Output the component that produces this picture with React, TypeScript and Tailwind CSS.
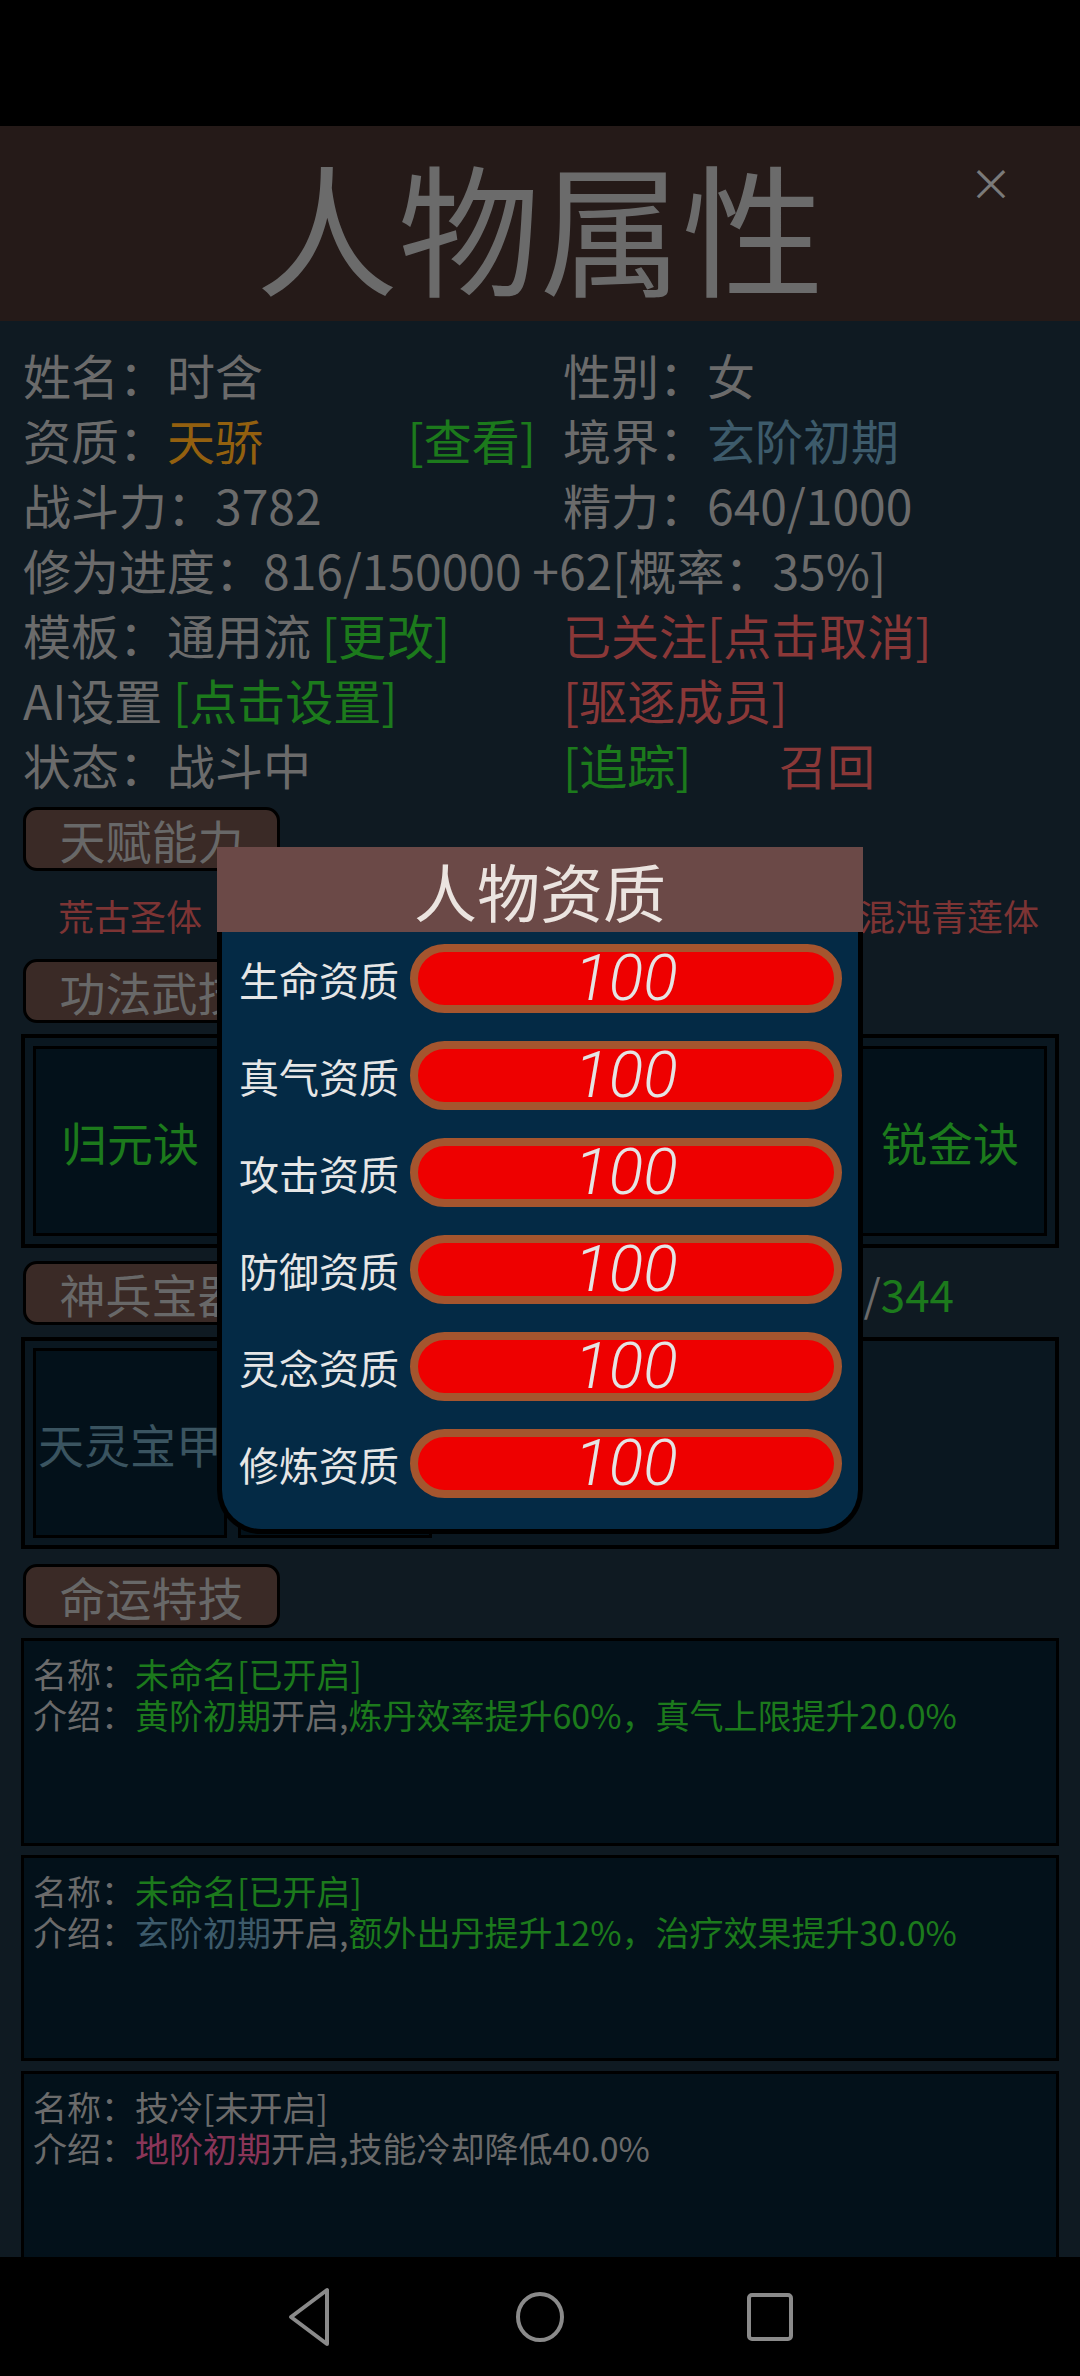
import React from 'react'

const GRAY = 'text-[#6b6b6b]'
const GREEN = 'text-[#1c7a1c]'
const RED = 'text-[#8a3838]'

const QUALITIES = ['生命资质', '真气资质', '攻击资质', '防御资质', '灵念资质', '修炼资质']

function Tab({ label, children }: { label: string; children?: React.ReactNode }) {
  return (
    <div className="flex items-center">
      <div className="ml-[2px] flex h-[64px] w-[257px] items-center justify-center rounded-[14px] border-[3px] border-black bg-[#3a2a26] text-[46px] leading-none text-[#686868]">
        {label}
      </div>
      {children}
    </div>
  )
}

function Cell({ text, color }: { text?: string; color?: string }) {
  return (
    <div className={`flex h-[190px] w-[194px] shrink-0 items-center justify-center border-[3px] border-black bg-[#03111a] text-[46px] leading-none ${color ?? ''}`}>
      {text}
    </div>
  )
}

function FateCard({ children, h }: { children: React.ReactNode; h: string }) {
  return (
    <div className={`flex flex-col gap-[7px] border-[3px] border-black bg-[#03111a] px-[9px] pt-[16px] text-[34px] leading-[34px] ${h}`}>
      {children}
    </div>
  )
}

export default function App() {
  return (
    <div className="relative flex h-[2376px] w-[1080px] flex-col overflow-hidden bg-[#0f1a22] font-['Noto_Sans_CJK_SC','Noto_Sans',sans-serif]">
      {/* status bar */}
      <div className="h-[126px] shrink-0 bg-black" />

      {/* header */}
      <div className="relative flex h-[195px] shrink-0 items-center justify-center bg-[#251a18]">
        <span className="text-[142px] leading-none text-[#6b6b6b]">人物属性</span>
        <span className="absolute right-[67px] top-[34px] text-[44px] leading-none text-[#7a7a7a]">×</span>
      </div>

      {/* content */}
      <div className="flex-1 overflow-hidden px-[21px] pt-[21px]">
        <div className={`grid grid-cols-[540px_1fr] pl-[2px] text-[48px] leading-[65px] ${GRAY}`}>
          <div>姓名：时含</div>
          <div>性别：女</div>
          <div className="flex w-[513px] justify-between">
            <span>
              资质：<span className="text-[#93600f]">天骄</span>
            </span>
            <span className={GREEN}>[查看]</span>
          </div>
          <div>
            境界：<span className="text-[#3d5b6b]">玄阶初期</span>
          </div>
          <div>战斗力：3782</div>
          <div>精力：640/1000</div>
          <div className="col-span-2 whitespace-nowrap">修为进度：816/150000 +62[概率：35%]</div>
          <div>
            模板：通用流 <span className={GREEN}>[更改]</span>
          </div>
          <div className={RED}>已关注[点击取消]</div>
          <div>
            AI设置 <span className={GREEN}>[点击设置]</span>
          </div>
          <div className={RED}>[驱逐成员]</div>
          <div>状态：战斗中</div>
          <div className="flex">
            <span className={`w-[216px] ${GREEN}`}>[追踪]</span>
            <span className={RED}>召回</span>
          </div>
        </div>

        <div className="mt-[10px]">
          <Tab label="天赋能力" />
        </div>
        <div className="flex h-[88px] items-center justify-between pl-[37px] pr-[20px] text-[36px] leading-none text-[#7d3434]">
          <span>荒古圣体</span>
          <span>混沌青莲体</span>
        </div>

        <Tab label="功法武技" />
        <div className="mt-[11px] flex h-[214px] items-center gap-[11px] border-[4px] border-black bg-[#0a1720] px-[8px]">
          <Cell text="归元诀" color={GREEN} />
          <Cell />
          <Cell />
          <Cell />
          <Cell text="锐金诀" color={GREEN} />
        </div>

        <div className="mt-[13px]">
          <Tab label="神兵宝器">
            <span className="ml-auto mr-[105px] text-[44px] leading-none">
              <span className={GRAY}>12/</span>
              <span className={GREEN}>344</span>
            </span>
          </Tab>
        </div>
        <div className="mt-[12px] flex h-[212px] items-center gap-[11px] border-[4px] border-black bg-[#0a1720] px-[8px]">
          <Cell text="天灵宝甲" color="text-[#3a5460]" />
          <Cell />
        </div>

        <div className="mt-[15px]">
          <Tab label="命运特技" />
        </div>
        <div className="mt-[10px] flex flex-col gap-[9px]">
          <FateCard h="h-[208px]">
            <div className={GRAY}>
              名称：<span className={GREEN}>未命名[已开启]</span>
            </div>
            <div className={GRAY}>
              介绍：<span className={GREEN}>黄阶初期</span>开启,
              <span className={GREEN}>炼丹效率提升60%，真气上限提升20.0%</span>
            </div>
          </FateCard>
          <FateCard h="h-[206px]">
            <div className={GRAY}>
              名称：<span className={GREEN}>未命名[已开启]</span>
            </div>
            <div className={GRAY}>
              介绍：<span className="text-[#3d5b6b]">玄阶初期</span>开启,
              <span className={GREEN}>额外出丹提升12%，治疗效果提升30.0%</span>
            </div>
          </FateCard>
          <div className="mt-px">
            <FateCard h="h-[206px]">
              <div className={GRAY}>名称：技冷[未开启]</div>
              <div className={GRAY}>
                介绍：<span className="text-[#8a3558]">地阶初期</span>开启,技能冷却降低40.0%
              </div>
            </FateCard>
          </div>
        </div>
      </div>

      {/* nav bar */}
      <div className="flex h-[119px] shrink-0 items-center justify-center bg-black">
        <svg width="720" height="70" viewBox="0 0 720 70" fill="none" stroke="#8a8a8a" strokeWidth="4" strokeLinejoin="round">
          <path d="M147 8 L147 62 L111 35 Z" />
          <ellipse cx="360" cy="35" rx="22" ry="23" />
          <rect x="569" y="13" width="42" height="44" rx="3" />
        </svg>
      </div>

      {/* modal */}
      <div className="absolute left-[217px] top-[847px] w-[646px]">
        <div className="flex h-[85px] items-center justify-center bg-[#6b4947]">
          <span className="text-[63px] leading-none text-[#ebe4e0]">人物资质</span>
        </div>
        <div className="flex h-[602px] flex-col gap-[28px] rounded-b-[44px] border-x-[5px] border-b-[5px] border-black bg-[#042a45] pl-[17px] pr-[16px] pt-[12px]">
          {QUALITIES.map((q) => (
            <div key={q} className="flex h-[69px] items-center gap-[11px]">
              <span className="w-[160px] text-[40px] leading-none text-[#e6e6e6]">{q}</span>
              <div className="flex h-[69px] w-[432px] items-center justify-center rounded-full border-[8px] border-[#a5552e] bg-[#ee0000]">
                <span className="font-['Roboto',sans-serif] text-[64px] font-light italic leading-none text-[#e4e4e4]">100</span>
              </div>
            </div>
          ))}
        </div>
      </div>
    </div>
  )
}
